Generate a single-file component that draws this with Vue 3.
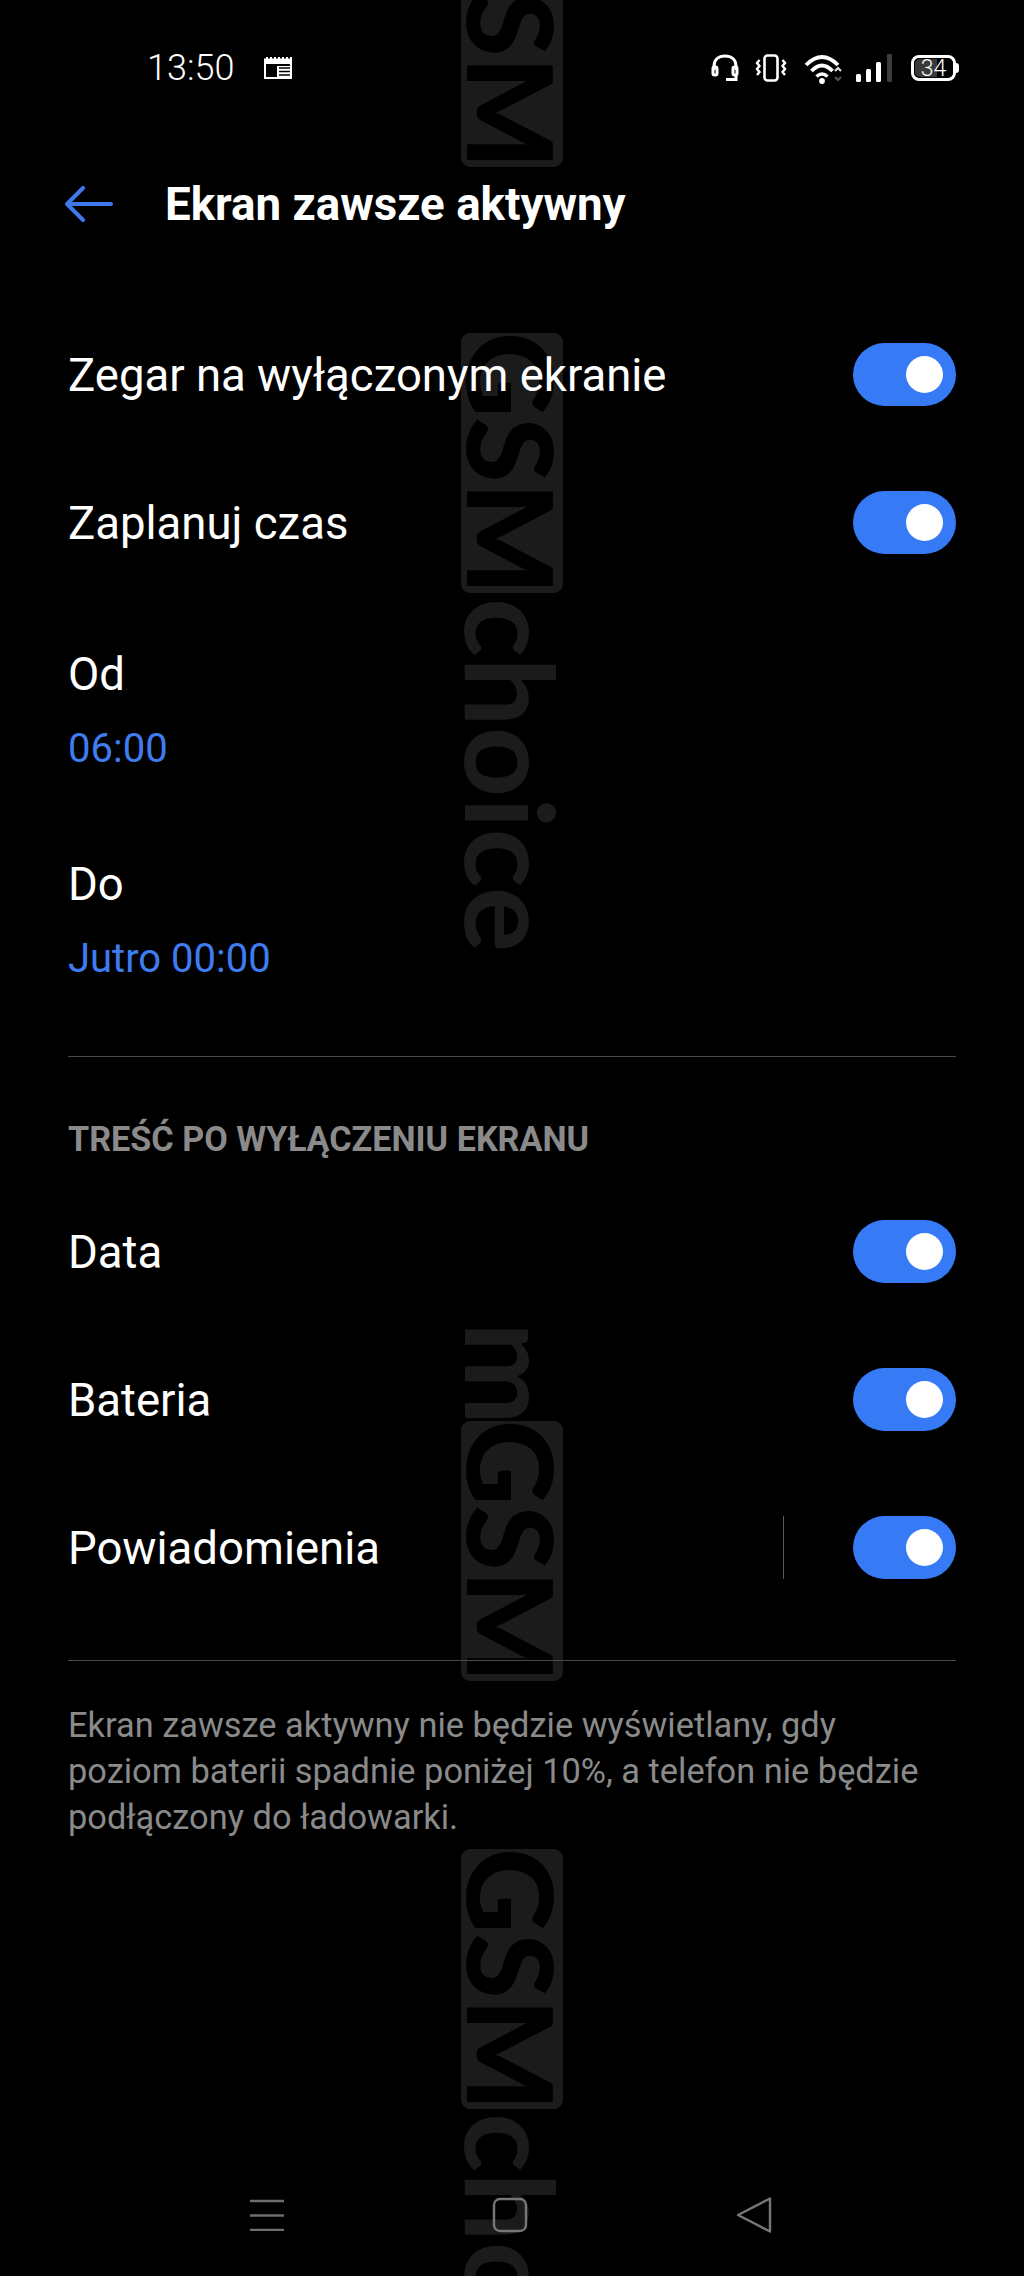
<template>
  <div class="phone">
    <div class="watermark">
      <div
        v-for="(mark, i) in marks"
        :key="i"
        class="mark"
        :class="mark.kind"
        :style="{ top: mark.top + 'px' }"
      >{{ mark.text }}</div>
    </div>

    <div class="status-bar">
      <div class="status-left">
        <span class="time">13:50</span>
        <svg class="ic-cal" width="30" height="24" viewBox="0 0 30 24">
          <path d="M1 1h28v22H1z" fill="#fff" />
          <path d="M1 1h2v1.5H1zM5 1h2v1.5H5zM9 1h2v1.5H9zM13 1h2v1.5h-2zM17 1h2v1.5h-2zM21 1h2v1.5h-2zM25 1h2v1.5h-2z" fill="#000" />
          <path d="M3 8h24v2H3zM3 10h11v11H3z" fill="#000" />
          <path d="M16 12h11M16 15.500h11M16 19h11" stroke="#000" stroke-width="1.600" />
        </svg>
      </div>
      <div class="status-right">
        <svg class="ic-head" width="30" height="28" viewBox="0 0 30 28" fill="none" stroke="#fff">
          <path d="M4 16V12C4 5.500 8.500 2 15 2s11 3.500 11 10v4" stroke-width="3" />
          <rect x="3" y="13" width="4" height="8" rx="1.500" stroke-width="3" />
          <rect x="23" y="13" width="4" height="8" rx="1.500" stroke-width="3" />
          <path d="M26 21v4.500H16" stroke-width="3" />
        </svg>
        <svg class="ic-vib" width="32" height="28" viewBox="0 0 32 28" fill="none" stroke="#fff">
          <rect x="9.500" y="1.500" width="13" height="25" rx="3" stroke-width="2.600" />
          <path d="M4.500 6l-2.500 3 2.500 3-2.500 3 2.500 3-2.500 3M27.500 6l2.500 3-2.500 3 2.500 3-2.500 3 2.500 3" stroke-width="2.400" />
        </svg>
        <svg class="ic-wifi" width="39" height="32" viewBox="0 0 39 32" fill="none">
          <path d="M2 13Q18 -3 34 13" stroke="#fff" stroke-width="3.800" />
          <path d="M7.500 19Q18 8 28.500 19" stroke="#fff" stroke-width="3.800" />
          <path d="M12.500 24.500Q18 19.500 23.500 24.500" stroke="#fff" stroke-width="3.400" />
          <circle cx="18" cy="29" r="2.900" fill="#fff" />
          <path d="M31 19l3-3 3 3" stroke="#ddd" stroke-width="2.200" />
          <path d="M31 25l3 3 3-3" stroke="#555" stroke-width="2.200" />
        </svg>
        <svg class="ic-signal" width="37" height="28" viewBox="0 0 37 28">
          <rect x="0" y="20" width="5" height="8" rx="1.500" fill="#fff" />
          <rect x="10" y="15" width="5" height="13" rx="1.500" fill="#fff" />
          <rect x="20" y="8" width="5" height="20" rx="1.500" fill="#fff" />
          <rect x="31" y="0" width="5" height="28" rx="1" fill="#3c3c3c" />
        </svg>
        <div class="battery">
          <div class="battery-fill"></div>
          <span class="battery-num">34</span>
          <div class="battery-tip"></div>
        </div>
      </div>
    </div>

    <div class="top-bar">
      <svg class="back" width="48" height="36" viewBox="0 0 48 36" fill="none" stroke="#3f78ea" stroke-width="4" stroke-linecap="round" stroke-linejoin="round">
        <path d="M18 2L2 18l16 16M3 18h43" />
      </svg>
      <h1 class="title">Ekran zawsze aktywny</h1>
    </div>

    <div class="content">
      <div class="row">
        <span class="label">Zegar na wyłączonym ekranie</span>
        <div class="toggle"><span class="knob"></span></div>
      </div>
      <div class="row">
        <span class="label">Zaplanuj czas</span>
        <div class="toggle"><span class="knob"></span></div>
      </div>
      <div class="time-row">
        <span class="label">Od</span>
        <span class="value">06:00</span>
      </div>
      <div class="time-row">
        <span class="label">Do</span>
        <span class="value">Jutro 00:00</span>
      </div>

      <div class="divider first"></div>
      <div class="section">TREŚĆ PO WYŁĄCZENIU EKRANU</div>

      <div class="row">
        <span class="label">Data</span>
        <div class="toggle"><span class="knob"></span></div>
      </div>
      <div class="row">
        <span class="label">Bateria</span>
        <div class="toggle"><span class="knob"></span></div>
      </div>
      <div class="row">
        <span class="label">Powiadomienia</span>
        <div class="row-end">
          <span class="vline"></span>
          <div class="toggle"><span class="knob"></span></div>
        </div>
      </div>

      <div class="divider second"></div>
      <p class="note">Ekran zawsze aktywny nie będzie wyświetlany, gdy poziom baterii spadnie poniżej 10%, a telefon nie będzie podłączony do ładowarki.</p>
    </div>

    <div class="nav-bar">
      <svg width="34" height="32" viewBox="0 0 34 32" stroke="#6e6e6e" stroke-width="2.400">
        <path d="M0 2h34M0 16.500h34M0 31h34" />
      </svg>
      <svg width="36" height="36" viewBox="0 0 36 36" fill="none" stroke="#777" stroke-width="2.400">
        <rect x="2" y="2" width="32" height="32" rx="6" />
      </svg>
      <svg width="36" height="38" viewBox="0 0 36 38" fill="none" stroke="#777" stroke-width="2.400" stroke-linejoin="round">
        <path d="M34 2.500v33L2 19z" />
      </svg>
    </div>
  </div>
</template>

<script setup>
const marks = [
  { text: 'GSM', kind: 'box', top: -93 },
  { text: 'GSM', kind: 'box', top: 333 },
  { text: 'choice', kind: 'word', top: 598 },
  { text: 'm', kind: 'word', top: 1322 },
  { text: 'GSM', kind: 'box', top: 1421 },
  { text: 'GSM', kind: 'box', top: 1849 },
  { text: 'choice', kind: 'word', top: 2113 }
]
</script>

<style>
html, body {
  background: #000;
}
</style>

<style scoped>
.phone {
  position: relative;
  width: 1024px;
  height: 2276px;
  overflow: hidden;
  background: #000;
  color: #fff;
  font-family: Roboto, "Liberation Sans", sans-serif;
}

/* watermark sits under everything */
.watermark {
  position: absolute;
  inset: 0;
  z-index: 0;
}

.mark {
  position: absolute;
  writing-mode: vertical-rl;
  white-space: nowrap;
  font-family: Lato, Roboto, sans-serif;
  line-height: 1;
}

.mark.box {
  left: 461px;
  width: 102px;
  height: 260px;
  display: flex;
  align-items: center;
  justify-content: center;
  background: #1b1b1b;
  border-radius: 9px;
  color: #000;
  font-size: 118px;
  font-weight: 900;
}

.mark.word {
  left: 461px;
  width: 102px;
  display: flex;
  align-items: center;
  justify-content: flex-start;
  color: #1b1b1b;
  font-size: 123px;
  font-weight: 700;
}

.status-bar,
.top-bar,
.content,
.nav-bar {
  position: relative;
  z-index: 1;
}

.status-bar {
  height: 134px;
  box-sizing: border-box;
  display: flex;
  align-items: center;
  justify-content: space-between;
  padding: 2px 68px 0 147px;
}

.status-left,
.status-right {
  display: flex;
  align-items: center;
}

.time {
  font-size: 36px;
  font-weight: 300;
  width: 116px;
}

.ic-vib {
  margin-left: 15px;
}

.ic-wifi {
  margin-left: 17px;
}

.ic-signal {
  margin-left: 13px;
}

.battery {
  position: relative;
  width: 45px;
  height: 26px;
  margin-left: 18px;
  border: 3px solid #fff;
  border-radius: 8px;
  box-sizing: border-box;
  display: flex;
  align-items: center;
  justify-content: center;
}

.battery-fill {
  position: absolute;
  left: 1px;
  top: 1px;
  bottom: 1px;
  width: 22px;
  border-radius: 5px 0 0 5px;
  background: #3a3a3a;
}

.battery-num {
  position: relative;
  font-size: 23px;
  font-weight: 300;
  line-height: 1;
}

.battery-tip {
  position: absolute;
  right: -6px;
  top: 5px;
  width: 3px;
  height: 10px;
  border-radius: 0 3px 3px 0;
  background: #fff;
}

.top-bar {
  height: 140px;
  display: flex;
  align-items: center;
  padding-left: 65px;
}

.back {
  flex-shrink: 0;
}

.title {
  margin: 0 0 0 52px;
  font-size: 45.700px;
  font-weight: 700;
  color: #fff;
}

.content {
  padding: 26px 68px 0;
}

.row {
  height: 148px;
  display: flex;
  align-items: center;
  justify-content: space-between;
}

.row .label {
  padding-top: 3px;
}

.label {
  font-size: 45.500px;
  line-height: 54px;
}

.toggle {
  position: relative;
  width: 103px;
  height: 63px;
  border-radius: 32px;
  background: #367af6;
}

.knob {
  position: absolute;
  right: 13px;
  top: 13px;
  width: 37px;
  height: 37px;
  border-radius: 50%;
  background: #fff;
}

.row-end {
  display: flex;
  align-items: center;
  gap: 69px;
}

.vline {
  width: 1px;
  height: 63px;
  background: #5a5a5a;
}

.time-row {
  height: 210px;
  padding-top: 52px;
  box-sizing: border-box;
  display: flex;
  flex-direction: column;
  gap: 20px;
}

.value {
  font-size: 40px;
  line-height: 54px;
  color: #3f7cf0;
}

.divider {
  height: 1px;
  background: #4a4a4a;
}

.divider.first {
  margin-top: 40px;
}

.divider.second {
  margin-top: 39px;
}

.section {
  margin-top: 62px;
  margin-bottom: 18px;
  font-size: 34.200px;
  line-height: 40px;
  font-weight: 700;
  color: #8a8a8a;
}

.note {
  margin: 41px 0 0;
  max-width: 870px;
  font-size: 34.400px;
  line-height: 46px;
  color: #8a8a8a;
}

.nav-bar {
  position: absolute;
  left: 250px;
  width: 522px;
  top: 2196px;
  height: 38px;
  display: flex;
  align-items: center;
  justify-content: space-between;
  z-index: 1;
}
</style>
